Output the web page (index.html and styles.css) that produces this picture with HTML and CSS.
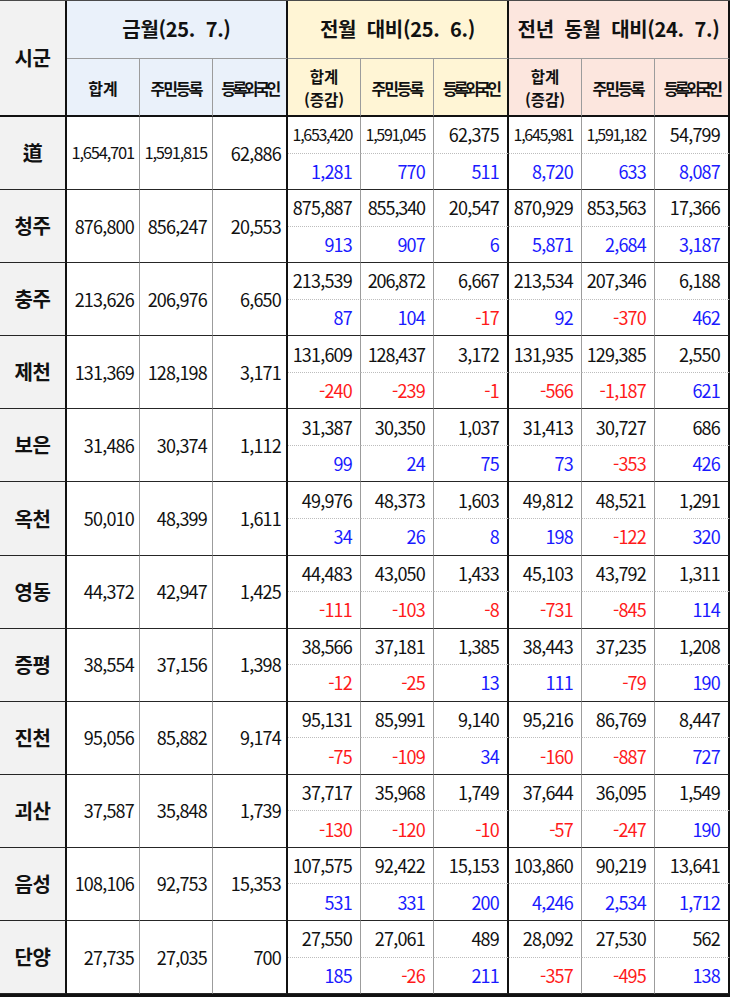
FILE: index.html
```html
<!DOCTYPE html>
<html lang="ko">
<head>
<meta charset="utf-8">
<title>시군별 인구 현황</title>
<link rel="stylesheet" href="styles.css">
</head>
<body>
<div class="sheet">
  <div class="h0 e">시군</div>
  <div class="hg c-blue e">금월(25.  7.)</div>
  <div class="hg c-yel e">전월  대비(25.  6.)</div>
  <div class="hg c-pink e">전년  동월  대비(24.  7.)</div>

  <div class="hs c-blue">합계</div>
  <div class="hs c-blue t1">주민등록</div>
  <div class="hs c-blue t2 e">등록외국인</div>
  <div class="hs c-yel two"><span>합계</span><span>(증감)</span></div>
  <div class="hs c-yel t1">주민등록</div>
  <div class="hs c-yel t3 e">등록외국인</div>
  <div class="hs c-pink two"><span>합계</span><span>(증감)</span></div>
  <div class="hs c-pink t1">주민등록</div>
  <div class="hs c-pink t3 e">등록외국인</div>

  <!-- 道 -->
  <div class="nm e">道</div>
  <div class="v k1">1,654,701</div>
  <div class="v k1">1,591,815</div>
  <div class="v e">62,886</div>
  <div class="u w k2">1,653,420</div>
  <div class="u w k2">1,591,045</div>
  <div class="u w e">62,375</div>
  <div class="u w k2">1,645,981</div>
  <div class="u w k2">1,591,182</div>
  <div class="u w e">54,799</div>
  <div class="l w p">1,281</div>
  <div class="l w p">770</div>
  <div class="l w p e">511</div>
  <div class="l w p">8,720</div>
  <div class="l w p">633</div>
  <div class="l w p e">8,087</div>

  <!-- 청주 -->
  <div class="nm e">청주</div>
  <div class="v">876,800</div>
  <div class="v">856,247</div>
  <div class="v e">20,553</div>
  <div class="u w">875,887</div>
  <div class="u w k0">855,340</div>
  <div class="u w e">20,547</div>
  <div class="u w">870,929</div>
  <div class="u w">853,563</div>
  <div class="u w e">17,366</div>
  <div class="l w p">913</div>
  <div class="l w p">907</div>
  <div class="l w p e">6</div>
  <div class="l w p">5,871</div>
  <div class="l w p">2,684</div>
  <div class="l w p e">3,187</div>

  <!-- 충주 -->
  <div class="nm e">충주</div>
  <div class="v">213,626</div>
  <div class="v">206,976</div>
  <div class="v e">6,650</div>
  <div class="u w">213,539</div>
  <div class="u w k0">206,872</div>
  <div class="u w e">6,667</div>
  <div class="u w">213,534</div>
  <div class="u w">207,346</div>
  <div class="u w e">6,188</div>
  <div class="l w p">87</div>
  <div class="l w p">104</div>
  <div class="l w n e">-17</div>
  <div class="l w p">92</div>
  <div class="l w n">-370</div>
  <div class="l w p e">462</div>

  <!-- 제천 -->
  <div class="nm e">제천</div>
  <div class="v">131,369</div>
  <div class="v">128,198</div>
  <div class="v e">3,171</div>
  <div class="u w">131,609</div>
  <div class="u w k0">128,437</div>
  <div class="u w e">3,172</div>
  <div class="u w">131,935</div>
  <div class="u w">129,385</div>
  <div class="u w e">2,550</div>
  <div class="l w n">-240</div>
  <div class="l w n">-239</div>
  <div class="l w n e">-1</div>
  <div class="l w n">-566</div>
  <div class="l w n">-1,187</div>
  <div class="l w p e">621</div>

  <!-- 보은 -->
  <div class="nm e">보은</div>
  <div class="v">31,486</div>
  <div class="v">30,374</div>
  <div class="v e">1,112</div>
  <div class="u w">31,387</div>
  <div class="u w">30,350</div>
  <div class="u w e">1,037</div>
  <div class="u w">31,413</div>
  <div class="u w">30,727</div>
  <div class="u w e">686</div>
  <div class="l w p">99</div>
  <div class="l w p">24</div>
  <div class="l w p e">75</div>
  <div class="l w p">73</div>
  <div class="l w n">-353</div>
  <div class="l w p e">426</div>

  <!-- 옥천 -->
  <div class="nm e">옥천</div>
  <div class="v">50,010</div>
  <div class="v">48,399</div>
  <div class="v e">1,611</div>
  <div class="u w">49,976</div>
  <div class="u w">48,373</div>
  <div class="u w e">1,603</div>
  <div class="u w">49,812</div>
  <div class="u w">48,521</div>
  <div class="u w e">1,291</div>
  <div class="l w p">34</div>
  <div class="l w p">26</div>
  <div class="l w p e">8</div>
  <div class="l w p">198</div>
  <div class="l w n">-122</div>
  <div class="l w p e">320</div>

  <!-- 영동 -->
  <div class="nm e">영동</div>
  <div class="v">44,372</div>
  <div class="v">42,947</div>
  <div class="v e">1,425</div>
  <div class="u w">44,483</div>
  <div class="u w">43,050</div>
  <div class="u w e">1,433</div>
  <div class="u w">45,103</div>
  <div class="u w">43,792</div>
  <div class="u w e">1,311</div>
  <div class="l w n">-111</div>
  <div class="l w n">-103</div>
  <div class="l w n e">-8</div>
  <div class="l w n">-731</div>
  <div class="l w n">-845</div>
  <div class="l w p e">114</div>

  <!-- 증평 -->
  <div class="nm e">증평</div>
  <div class="v">38,554</div>
  <div class="v">37,156</div>
  <div class="v e">1,398</div>
  <div class="u w">38,566</div>
  <div class="u w">37,181</div>
  <div class="u w e">1,385</div>
  <div class="u w">38,443</div>
  <div class="u w">37,235</div>
  <div class="u w e">1,208</div>
  <div class="l w n">-12</div>
  <div class="l w n">-25</div>
  <div class="l w p e">13</div>
  <div class="l w p">111</div>
  <div class="l w n">-79</div>
  <div class="l w p e">190</div>

  <!-- 진천 -->
  <div class="nm e">진천</div>
  <div class="v">95,056</div>
  <div class="v">85,882</div>
  <div class="v e">9,174</div>
  <div class="u w">95,131</div>
  <div class="u w">85,991</div>
  <div class="u w e">9,140</div>
  <div class="u w">95,216</div>
  <div class="u w">86,769</div>
  <div class="u w e">8,447</div>
  <div class="l w n">-75</div>
  <div class="l w n">-109</div>
  <div class="l w p e">34</div>
  <div class="l w n">-160</div>
  <div class="l w n">-887</div>
  <div class="l w p e">727</div>

  <!-- 괴산 -->
  <div class="nm e">괴산</div>
  <div class="v">37,587</div>
  <div class="v">35,848</div>
  <div class="v e">1,739</div>
  <div class="u w">37,717</div>
  <div class="u w">35,968</div>
  <div class="u w e">1,749</div>
  <div class="u w">37,644</div>
  <div class="u w">36,095</div>
  <div class="u w e">1,549</div>
  <div class="l w n">-130</div>
  <div class="l w n">-120</div>
  <div class="l w n e">-10</div>
  <div class="l w n">-57</div>
  <div class="l w n">-247</div>
  <div class="l w p e">190</div>

  <!-- 음성 -->
  <div class="nm e">음성</div>
  <div class="v">108,106</div>
  <div class="v">92,753</div>
  <div class="v e">15,353</div>
  <div class="u w">107,575</div>
  <div class="u w">92,422</div>
  <div class="u w e">15,153</div>
  <div class="u w">103,860</div>
  <div class="u w">90,219</div>
  <div class="u w e">13,641</div>
  <div class="l w p">531</div>
  <div class="l w p">331</div>
  <div class="l w p e">200</div>
  <div class="l w p">4,246</div>
  <div class="l w p">2,534</div>
  <div class="l w p e">1,712</div>

  <!-- 단양 -->
  <div class="nm e">단양</div>
  <div class="v">27,735</div>
  <div class="v">27,035</div>
  <div class="v e">700</div>
  <div class="u w">27,550</div>
  <div class="u w">27,061</div>
  <div class="u w e">489</div>
  <div class="u w">28,092</div>
  <div class="u w">27,530</div>
  <div class="u w e">562</div>
  <div class="l w p">185</div>
  <div class="l w n">-26</div>
  <div class="l w p e">211</div>
  <div class="l w n">-357</div>
  <div class="l w n">-495</div>
  <div class="l w p e">138</div>
</div>
</body>
</html>
```

FILE: styles.css
```css
html, body {
  margin: 0;
  padding: 0;
  background: #ffffff;
}

.sheet {
  display: grid;
  grid-template-columns: 67px 73px 73px 75px 73px 73px 75px 73px 73px 75px;
  grid-template-rows: 58px 58px repeat(24, 36.55px);
  width: 730px;
  border-top: 1px solid #4a4a4a;
  border-bottom: 3px solid #111111;
  font-family: "Noto Sans CJK KR", "Noto Sans", sans-serif;
  color: #111111;
}

.sheet > div {
  box-sizing: border-box;
  display: flex;
  align-items: center;
  justify-content: flex-end;
  white-space: pre;
  line-height: 1;
  border-right: 1px solid #9c9c9c;
  border-bottom: 1px solid #262626;
}

.sheet > div.e {
  border-right: 2px solid #111111;
}

/* header */
.h0 {
  grid-row: span 2;
  justify-content: center !important;
  background: #f2f2f2;
  font-size: 20px;
  font-weight: 700;
  letter-spacing: -0.5px;
  border-bottom: 2px solid #111111 !important;
}

.hg {
  grid-column: span 3;
  justify-content: center !important;
  font-size: 20px;
  font-weight: 700;
  letter-spacing: -0.3px;
  border-bottom: 1px solid #9c9c9c !important;
  padding-bottom: 2px;
}

.hs {
  justify-content: center !important;
  text-align: center;
  font-size: 16px;
  font-weight: 700;
  border-bottom: 2px solid #111111 !important;
  padding-top: 2px;
}

.sheet > div.two {
  flex-direction: column;
  justify-content: center;
  align-items: center;
  font-size: 15.5px;
  line-height: 1.46;
  padding-top: 1px;
}

.two span {
  display: block;
}

.t1 { letter-spacing: -2px; }
.t2 { letter-spacing: -3.4px; }
.t3 { letter-spacing: -3.6px; }

.c-blue { background: #eaf1fa; }
.c-yel { background: #fff5d5; }
.c-pink { background: #fce6de; }

/* body */
.nm {
  grid-row: span 2;
  justify-content: center !important;
  background: #f2f2f2;
  font-size: 20px;
  font-weight: 700;
  letter-spacing: -0.5px;
}

.v {
  grid-row: span 2;
  font-size: 18px;
  letter-spacing: -0.8px;
  padding-right: 5px;
  padding-bottom: 1px;
}

.u, .l {
  font-size: 18px;
  letter-spacing: -0.8px;
  padding-bottom: 1px;
}

.w {
  padding-right: 8px;
}

.sheet > div.u {
  border-bottom: 1px dotted #bdbdbd;
}

.sheet > div.k0 { letter-spacing: -1.1px; }
.sheet > div.k1 { font-size: 16.5px; letter-spacing: -1.2px; }
.sheet > div.k2 { font-size: 16px; letter-spacing: -1.3px; }

.p { color: #1a1aff; }
.n { color: #ff1a1a; }
```
